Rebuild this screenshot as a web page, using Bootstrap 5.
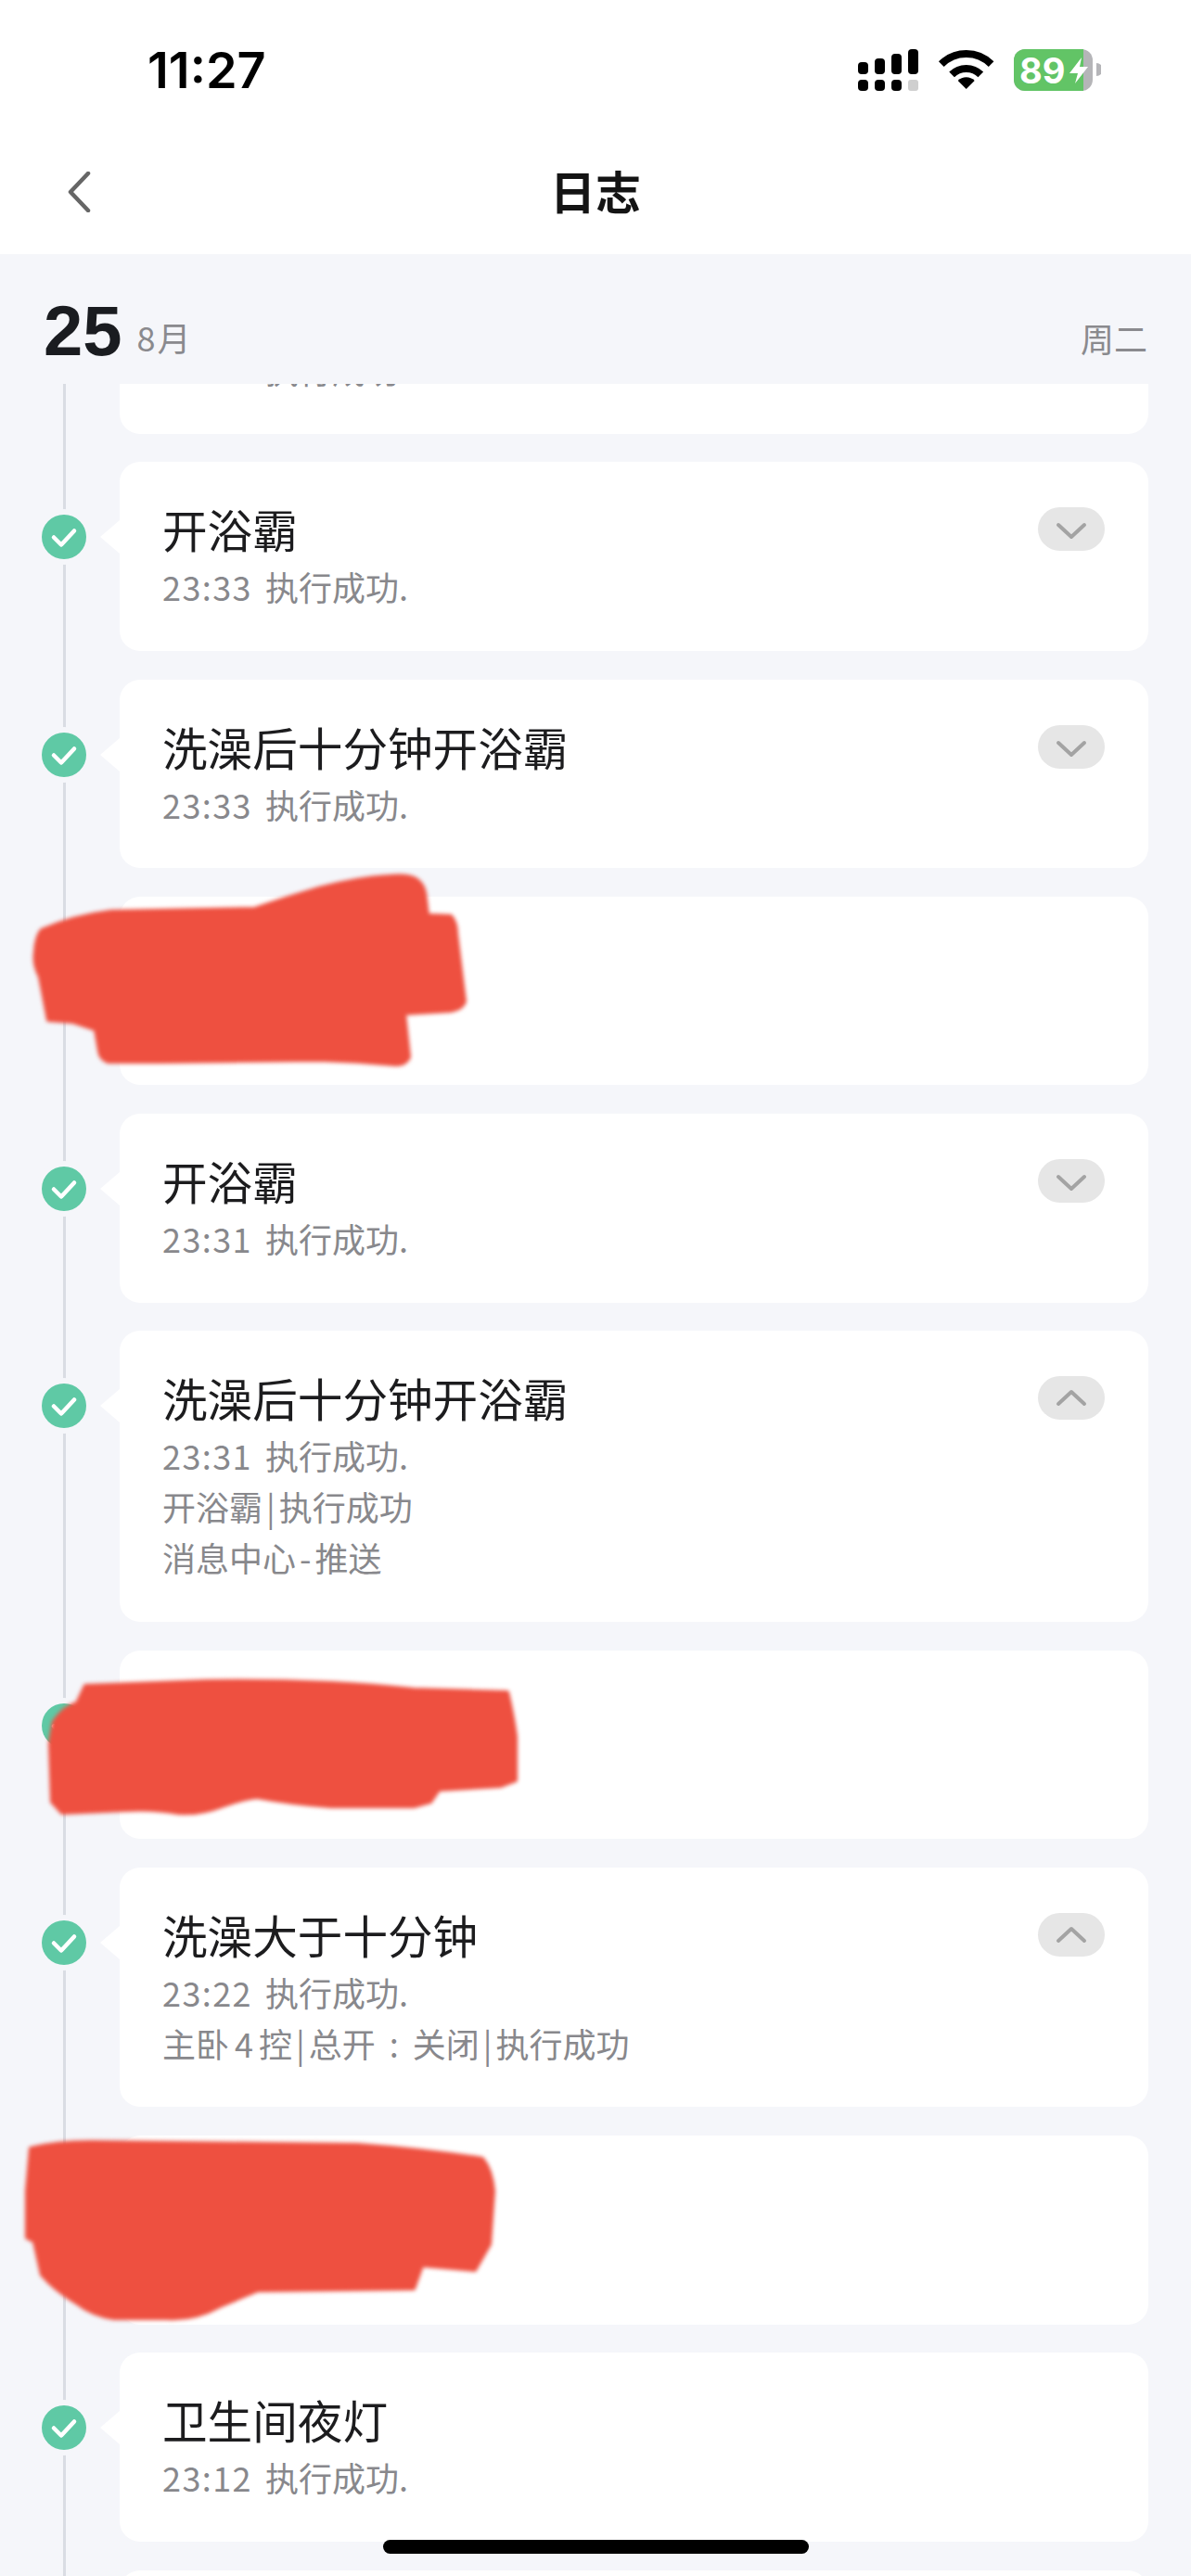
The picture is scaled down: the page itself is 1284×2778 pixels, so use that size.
<!DOCTYPE html>
<html lang="zh-CN">
<head>
  <meta charset="utf-8" />
  <title>日志</title>
  <link href="https://cdn.jsdelivr.net/npm/bootstrap@5.3.0/dist/css/bootstrap.min.css" rel="stylesheet">
  <script src="https://cdn.jsdelivr.net/npm/bootstrap@5.3.0/dist/js/bootstrap.bundle.min.js"></script>

  <style>
    html, body {
      height: 2778px;
      overflow: hidden;
    }

    body {
      position: relative;
      background: #f5f6fa;
      font-family: "Noto Sans CJK SC", "Liberation Sans", sans-serif;
    }

    .status-row {
      height: 140px;
      padding: 11px 97px 0 159px;
    }

    .status-time {
      font-family: Inter, "Liberation Sans", sans-serif;
      font-size: 54px;
      font-weight: 600;
      color: #000;
      line-height: 1;
    }

    .nav-row {
      height: 134px;
      padding: 0 72px 0 72px;
    }

    .nav-side {
      flex: 1 1 0;
    }

    .nav-title {
      font-size: 49px;
      font-weight: 700;
      color: #141414;
      line-height: 1;
      margin-bottom: 6px;
    }

    .date-row {
      height: 140px;
      padding: 47px 47px 0 47px;
    }

    .date-day {
      font-family: "Liberation Sans", sans-serif;
      font-size: 76px;
      font-weight: 700;
      line-height: 72px;
      color: #1a1c20;
    }

    .date-meta {
      font-size: 36px;
      line-height: 48px;
      color: #8a8a8e;
    }

    .date-month {
      margin-bottom: 6px;
      letter-spacing: 2px;
    }

    .date-week {
      margin-top: 19px;
    }

    .tl-wrap {
      position: relative;
      height: 2364px;
      overflow: hidden;
    }

    .tl-wrap::before {
      content: "";
      position: absolute;
      left: 68px;
      top: 0;
      bottom: 0;
      width: 3px;
      background: #d9dce3;
    }

    .tl-list {
      margin-top: -150px;
      padding-right: 46px;
      gap: 30.75px;
    }

    .tl-rail {
      position: relative;
      flex: 0 0 129px;
      padding: 57px 0 0 45px;
    }

    .tl-dot {
      width: 48px;
      height: 48px;
      border-radius: 50%;
      background: #5fc9a5;
      box-shadow: 0 0 0 6px #f5f6fa;
    }

    .log-card {
      border-radius: 22px;
      min-height: 203.5px;
    }

    .log-card::before {
      content: "";
      position: absolute;
      left: -21px;
      top: 63px;
      border-style: solid;
      border-width: 18px 21px 18px 0;
      border-color: transparent #fff transparent transparent;
    }

    .log-body {
      padding: 42px 47px 41.5px 46px;
    }

    /* the top card is scrolled under the date row, only its last line peeks out */
    .log-body-clipped {
      padding-top: 107px;
    }

    .log-title {
      font-size: 48.6px;
      line-height: 60px;
      margin-bottom: 5px;
      color: #1c1c1e;
    }

    .log-line {
      font-size: 36px;
      line-height: 55px;
      color: #88888c;
    }

    .log-time {
      letter-spacing: 1.4px;
      margin-right: 6px;
    }

    .log-sep {
      margin: 0 4px;
    }

    .log-gap {
      margin: 0 6px;
    }

    .log-colon {
      margin: 0 15px;
    }

    .pill-toggle {
      width: 72px;
      height: 47px;
      margin-top: 7px;
      border-radius: 24px;
      background: #e6e6e6;
    }

    .scribbles {
      position: absolute;
      left: 0;
      top: 0;
      filter: blur(2px);
      pointer-events: none;
    }

    .home-bar {
      position: absolute;
      left: 413px;
      top: 2739px;
      width: 459px;
      height: 15px;
      border-radius: 8px;
      background: #000;
    }
  </style>
</head>
<body>
  <svg width="0" height="0" class="position-absolute">
    <defs>
      <symbol id="tick" viewBox="0 0 48 48">
        <path d="M13 24.5l8 8 14-15" fill="none" stroke="#fff" stroke-width="4.5" stroke-linecap="round" stroke-linejoin="round"/>
      </symbol>
      <symbol id="chev-down" viewBox="0 0 72 47">
        <path d="M22 19l14 13 14-13" fill="none" stroke="#a3a3a3" stroke-width="4" stroke-linecap="round" stroke-linejoin="round"/>
      </symbol>
      <symbol id="chev-up" viewBox="0 0 72 47">
        <path d="M22 30l14-13 14 13" fill="none" stroke="#a3a3a3" stroke-width="4" stroke-linecap="round" stroke-linejoin="round"/>
      </symbol>
    </defs>
  </svg>

  <header class="bg-white">
    <div class="status-row d-flex justify-content-between align-items-center">
      <span class="status-time">11:27</span>
      <svg width="262" height="45" viewBox="0 0 262 45">
        <g fill="#000">
          <rect x="0" y="14" width="11" height="13" rx="4"/>
          <rect x="18" y="10" width="11" height="17" rx="4"/>
          <rect x="36" y="5" width="11" height="22" rx="4"/>
          <rect x="54" y="0" width="11" height="27" rx="4"/>
          <rect x="0" y="33" width="11" height="12" rx="4"/>
          <rect x="18" y="33" width="11" height="12" rx="4"/>
          <rect x="36" y="33" width="11" height="12" rx="4"/>
        </g>
        <rect x="54" y="33" width="11" height="12" rx="3" fill="#cfcfcf"/>
        <g fill="none" stroke="#000" stroke-width="8">
          <path d="M89.8 16.1A38 38 0 0 1 143.6 16.1"/>
          <path d="M101.1 27.4A22 22 0 0 1 132.3 27.4"/>
        </g>
        <path d="M116.7 43L107.7 34A12.7 12.7 0 0 1 125.7 34Z" fill="#000"/>
        <rect x="168" y="0" width="85" height="45" rx="12" fill="#b5b5b8"/>
        <path d="M180 0H243V45H180A12 12 0 0 1 168 33V12A12 12 0 0 1 180 0Z" fill="#62c466"/>
        <path d="M257 15A7 7 0 0 1 257 29Z" fill="#b5b5b8"/>
        <text x="174" y="36.5" font-family="Inter, Liberation Sans, sans-serif" font-size="38" font-weight="700" fill="#fff">89</text>
        <path d="M241 9L228 26H237L234 37L248 19H239Z" fill="#fff"/>
      </svg>
    </div>
    <div class="nav-row d-flex justify-content-between align-items-center">
      <div class="nav-side">
        <svg class="d-block" width="26" height="44" viewBox="0 0 26 44">
          <path d="M23 2L4 22l19 20" fill="none" stroke="#666" stroke-width="4.5" stroke-linecap="round" stroke-linejoin="round"/>
        </svg>
      </div>
      <div class="nav-title">日志</div>
      <div class="nav-side"></div>
    </div>
  </header>

  <div class="date-row d-flex justify-content-between align-items-start">
    <div class="d-flex align-items-end gap-3">
      <span class="date-day">25</span>
      <span class="date-meta date-month">8月</span>
    </div>
    <span class="date-meta date-week">周二</span>
  </div>

  <div class="tl-wrap">
    <div class="tl-list d-flex flex-column">

      <div class="d-flex">
        <div class="tl-rail"><div class="tl-dot"><svg width="48" height="48"><use href="#tick"/></svg></div></div>
        <div class="card border-0 log-card flex-fill">
          <div class="log-body log-body-clipped">
            <div class="log-line"><span class="log-time">23:33</span> 执行成功.</div>
          </div>
        </div>
      </div>

      <div class="d-flex">
        <div class="tl-rail"><div class="tl-dot"><svg width="48" height="48"><use href="#tick"/></svg></div></div>
        <div class="card border-0 log-card flex-fill">
          <div class="log-body d-flex justify-content-between align-items-start">
            <div><div class="log-title">开浴霸</div><div class="log-line"><span class="log-time">23:33</span> 执行成功.</div></div>
            <div class="pill-toggle"><svg width="72" height="47"><use href="#chev-down"/></svg></div>
          </div>
        </div>
      </div>

      <div class="d-flex">
        <div class="tl-rail"><div class="tl-dot"><svg width="48" height="48"><use href="#tick"/></svg></div></div>
        <div class="card border-0 log-card flex-fill">
          <div class="log-body d-flex justify-content-between align-items-start">
            <div><div class="log-title">洗澡后十分钟开浴霸</div><div class="log-line"><span class="log-time">23:33</span> 执行成功.</div></div>
            <div class="pill-toggle"><svg width="72" height="47"><use href="#chev-down"/></svg></div>
          </div>
        </div>
      </div>

      <div class="d-flex">
        <div class="tl-rail"><div class="tl-dot"><svg width="48" height="48"><use href="#tick"/></svg></div></div>
        <div class="card border-0 log-card flex-fill"></div>
      </div>

      <div class="d-flex">
        <div class="tl-rail"><div class="tl-dot"><svg width="48" height="48"><use href="#tick"/></svg></div></div>
        <div class="card border-0 log-card flex-fill">
          <div class="log-body d-flex justify-content-between align-items-start">
            <div><div class="log-title">开浴霸</div><div class="log-line"><span class="log-time">23:31</span> 执行成功.</div></div>
            <div class="pill-toggle"><svg width="72" height="47"><use href="#chev-down"/></svg></div>
          </div>
        </div>
      </div>

      <div class="d-flex">
        <div class="tl-rail"><div class="tl-dot"><svg width="48" height="48"><use href="#tick"/></svg></div></div>
        <div class="card border-0 log-card flex-fill">
          <div class="log-body d-flex justify-content-between align-items-start">
            <div>
              <div class="log-title">洗澡后十分钟开浴霸</div>
              <div class="log-line"><span class="log-time">23:31</span> 执行成功.</div>
              <div class="log-line">开浴霸<span class="log-sep">|</span>执行成功</div>
              <div class="log-line">消息中心<span class="log-sep">-</span>推送</div>
            </div>
            <div class="pill-toggle"><svg width="72" height="47"><use href="#chev-up"/></svg></div>
          </div>
        </div>
      </div>

      <div class="d-flex">
        <div class="tl-rail"><div class="tl-dot"><svg width="48" height="48"><use href="#tick"/></svg></div></div>
        <div class="card border-0 log-card flex-fill"></div>
      </div>

      <div class="d-flex">
        <div class="tl-rail"><div class="tl-dot"><svg width="48" height="48"><use href="#tick"/></svg></div></div>
        <div class="card border-0 log-card flex-fill">
          <div class="log-body d-flex justify-content-between align-items-start">
            <div>
              <div class="log-title">洗澡大于十分钟</div>
              <div class="log-line"><span class="log-time">23:22</span> 执行成功.</div>
              <div class="log-line">主卧<span class="log-gap">4</span>控<span class="log-sep">|</span>总开<span class="log-colon">:</span>关闭<span class="log-sep">|</span>执行成功</div>
            </div>
            <div class="pill-toggle"><svg width="72" height="47"><use href="#chev-up"/></svg></div>
          </div>
        </div>
      </div>

      <div class="d-flex">
        <div class="tl-rail"><div class="tl-dot"><svg width="48" height="48"><use href="#tick"/></svg></div></div>
        <div class="card border-0 log-card flex-fill"></div>
      </div>

      <div class="d-flex">
        <div class="tl-rail"><div class="tl-dot"><svg width="48" height="48"><use href="#tick"/></svg></div></div>
        <div class="card border-0 log-card flex-fill">
          <div class="log-body d-flex justify-content-between align-items-start">
            <div><div class="log-title">卫生间夜灯</div><div class="log-line"><span class="log-time">23:12</span> 执行成功.</div></div>
          </div>
        </div>
      </div>

      <div class="d-flex">
        <div class="tl-rail"></div>
        <div class="card border-0 log-card flex-fill"></div>
      </div>

    </div>
  </div>

  <!-- red redaction strokes painted over the screenshot -->
  <svg class="scribbles" width="1284" height="2778" viewBox="0 0 1284 2778">
    <g fill="#ee5040" stroke="#ee5040" stroke-width="4" stroke-linejoin="round">
      <path d="M45 1003Q80 988 120 983L275 980Q310 968 344 958Q385 947 420 945Q440 943 448 948Q456 953 458 963L461 987L486 988Q492 995 492 1007L501 1080Q498 1088 486 1090L436 1093L441 1140Q437 1148 427 1148Q385 1144 344 1143L172 1145L117 1145Q108 1142 107 1133L103 1110L79 1102L52 1100L43 1053Q36 1040 38 1027Q39 1010 45 1003Z"/>
      <path d="M92 1818L223 1813Q290 1812 357 1815Q400 1817 446 1822L547 1825Q553 1850 556 1873L556 1920L540 1926L473 1930L464 1943L446 1948L357 1948Q315 1945 277 1938Q260 1940 241 1947Q215 1957 192 1955Q165 1950 134 1952L67 1955L56 1943L54 1880L58 1857Q70 1840 83 1837Z"/>
      <path d="M33 2317Q60 2310 98 2310L385 2313Q455 2318 520 2328Q530 2340 532 2363L528 2420L512 2448L455 2443L446 2468L278 2470Q258 2478 237 2487Q210 2502 180 2500L123 2500Q100 2497 82 2483Q60 2470 45 2453L37 2417L29 2413L29 2363Z"/>
    </g>
  </svg>

  <div class="home-bar"></div>
</body>
</html>
